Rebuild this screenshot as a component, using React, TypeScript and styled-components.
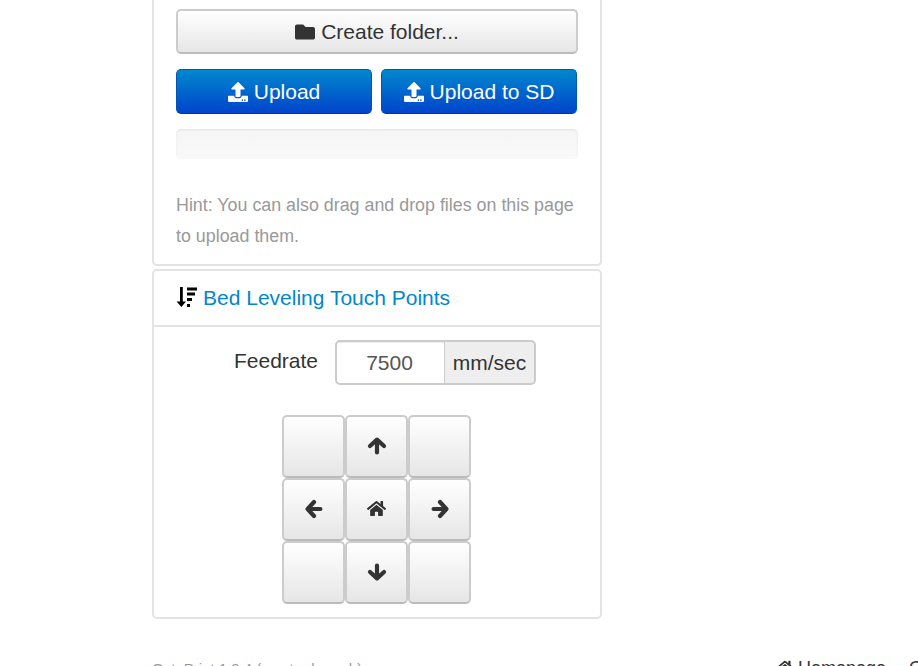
import React from 'react';
import styled, { createGlobalStyle } from 'styled-components';
import { FaFolder, FaHome, FaUpload } from 'react-icons/fa';

const GlobalStyle = createGlobalStyle`
  html, body {
    margin: 0;
    padding: 0;
    background: #fff;
    overflow: hidden;
  }
  body {
    font-family: "Liberation Sans", Arial, sans-serif;
    color: #333;
  }
`;

const Page = styled.div`
  width: 918px;
  height: 666px;
  overflow: hidden;
  padding-left: 152px;
  box-sizing: border-box;
`;

const Column = styled.div`
  width: 450px;
  display: flex;
  flex-direction: column;
  gap: 3px;
`;

const Panel = styled.section<{ $cut?: boolean }>`
  box-sizing: border-box;
  border: 2px solid #e3e3e3;
  border-radius: 5px;
  background: #fff;
  ${p => p.$cut && `
    border-top: none;
    border-top-left-radius: 0;
    border-top-right-radius: 0;
  `}
`;

const FilesBody = styled.div`
  padding: 9px 22px 0;
  height: 264px;
  box-sizing: border-box;
`;

const Button = styled.button<{ $primary?: boolean }>`
  display: flex;
  align-items: center;
  justify-content: center;
  gap: 6px;
  box-sizing: border-box;
  width: 100%;
  height: 45px;
  margin: 0;
  padding: 0;
  font-family: inherit;
  font-size: 21px;
  border-radius: 5px;
  color: ${p => (p.$primary ? '#fff' : '#333')};
  background: ${p => (p.$primary ? 'linear-gradient(#0088cc, #0044cc)' : 'linear-gradient(#fff, #e6e6e6)')};
  border: ${p => (p.$primary ? '1px solid #0055b3' : '2px solid #ccc')};
  border-bottom-color: ${p => (p.$primary ? '#00379f' : '#bbb')};
  svg {
    font-size: 20px;
  }
`;

const ButtonRow = styled.div`
  display: grid;
  grid-template-columns: 196px 196px;
  column-gap: 9px;
  margin-top: 15px;
`;

const Progress = styled.div`
  height: 30px;
  margin-top: 15px;
  border-radius: 5px;
  background: linear-gradient(#f5f5f5, #f9f9f9);
  box-shadow: inset 0 1px 2px rgba(0, 0, 0, 0.08);
`;

const Hint = styled.p`
  margin: 31px 0 0;
  font-size: 17.85px;
  line-height: 31px;
  color: #999;
`;

const PanelHeader = styled.header`
  display: flex;
  align-items: center;
  gap: 6px;
  height: 56px;
  padding: 0 22px 1px;
  box-sizing: border-box;
  border-bottom: 2px solid #e3e3e3;
  font-size: 21px;
  color: #0088cc;
`;

const LevelingBody = styled.div`
  height: 290px;
  box-sizing: border-box;
  padding-top: 13px;
`;

const FeedrateRow = styled.div`
  display: flex;
  align-items: center;
  padding-left: 80px;
`;

const FeedrateLabel = styled.label`
  width: 101px;
  font-size: 21px;
  margin-top: -3px;
  color: #333;
`;

const FeedrateInput = styled.div`
  box-sizing: border-box;
  width: 111px;
  height: 45px;
  padding-right: 2px;
  display: flex;
  align-items: center;
  justify-content: center;
  font-size: 21px;
  color: #555;
  border: 2px solid #ccc;
  border-radius: 5px 0 0 5px;
  box-shadow: inset 0 1px 1px rgba(0, 0, 0, 0.075);
`;

const FeedrateUnit = styled.div`
  box-sizing: border-box;
  width: 91px;
  height: 45px;
  margin-left: -1px;
  display: flex;
  align-items: center;
  justify-content: center;
  font-size: 21px;
  color: #333;
  background: #eee;
  border: 2px solid #ccc;
  border-left: none;
  border-radius: 0 5px 5px 0;
`;

const JogGrid = styled.div`
  display: grid;
  grid-template-columns: repeat(3, 63px);
  grid-auto-rows: 63px;
  justify-content: start;
  margin: 30px 0 0 128px;
`;

const JogButton = styled.button`
  display: flex;
  align-items: center;
  justify-content: center;
  box-sizing: border-box;
  width: 63px;
  height: 63px;
  margin: 0;
  padding: 0 0 2px;
  border: 2px solid #ccc;
  border-bottom-color: #bbb;
  border-radius: 5px;
  color: #333;
  font-size: 19px;
  background: linear-gradient(#fff, #e6e6e6);
`;

const ArrowSvg = styled.svg<{ $turn: number }>`
  width: 20px;
  height: 20px;
  transform: rotate(${p => p.$turn}deg);
`;

const Footer = styled.footer`
  display: flex;
  align-items: baseline;
  margin-top: 37px;
  width: 800px;
  font-size: 18px;
  line-height: 24px;
  white-space: nowrap;
`;

const Version = styled.span`
  flex: none;
  width: 625px;
  font-size: 15px;
  color: #999;
`;

const FooterLinks = styled.span`
  display: flex;
  flex: none;
  align-items: baseline;
  gap: 23px;
  color: #333;
  svg {
    margin-right: 5px;
    font-size: 16px;
    vertical-align: -1px;
  }
`;

// fat arrow, pointing up before the turn
const JogArrow = ({ turn }: { turn: number }) => (
  <ArrowSvg $turn={turn} viewBox="0 0 20 20">
    <path
      d="M3 10L10 3.6L17 10M10 5V16.4"
      fill="none"
      stroke="currentColor"
      strokeWidth="4.2"
      strokeLinecap="round"
      strokeLinejoin="round"
    />
  </ArrowSvg>
);

const SortIcon = () => (
  <svg width="21" height="22" viewBox="0 0 21 22" fill="#000">
    <path d="M4 0h2.8v14.5H10L5.4 20 .6 14.5H4z" />
    <path d="M11 .5h10v3H11zM11 5.5h8v3H11zM11 11h5v3h-5zM11 17h3v3h-3z" />
  </svg>
);

const jogCells = [null, 0, null, -90, 'home', 90, null, 180, null];

export default function App() {
  return (
    <Page>
      <GlobalStyle />
      <Column>
        <Panel $cut>
          <FilesBody>
            <Button><FaFolder />Create folder...</Button>
            <ButtonRow>
              <Button $primary><FaUpload />Upload</Button>
              <Button $primary><FaUpload />Upload to SD</Button>
            </ButtonRow>
            <Progress />
            <Hint>Hint: You can also drag and drop files on this page to upload them.</Hint>
          </FilesBody>
        </Panel>
        <Panel>
          <PanelHeader><SortIcon />Bed Leveling Touch Points</PanelHeader>
          <LevelingBody>
            <FeedrateRow>
              <FeedrateLabel>Feedrate</FeedrateLabel>
              <FeedrateInput>7500</FeedrateInput>
              <FeedrateUnit>mm/sec</FeedrateUnit>
            </FeedrateRow>
            <JogGrid>
              {jogCells.map((cell, i) => (
                <JogButton key={i}>
                  {cell === 'home' ? <FaHome /> : cell !== null ? <JogArrow turn={cell as number} /> : null}
                </JogButton>
              ))}
            </JogGrid>
          </LevelingBody>
        </Panel>
      </Column>
      <Footer>
        <Version>OctoPrint 1.3.4 (master branch)</Version>
        <FooterLinks>
          <span><FaHome />Homepage</span>
          <span>Get Help</span>
        </FooterLinks>
      </Footer>
    </Page>
  );
}
